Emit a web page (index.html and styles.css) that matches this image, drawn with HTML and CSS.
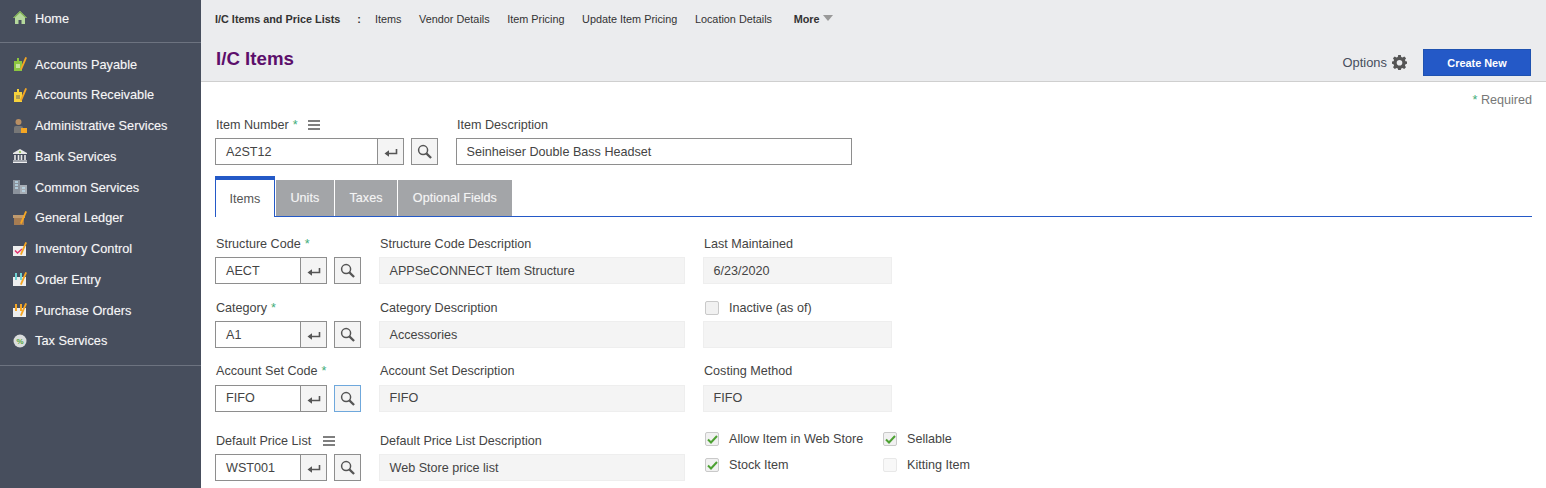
FILE: index.html
```html
<!DOCTYPE html>
<html lang="en">

<head>
    <meta charset="UTF-8">
    <meta name="viewport" content="width=device-width, initial-scale=1.0">
    <title>I/C Items</title>
    <link rel="stylesheet" href="styles.css">
</head>

<body>
    <svg class="svg-defs" width="0" height="0">
        <symbol id="pencil" viewBox="0 0 14 14"><path d="M12.3 0 L14 .7 L8.7 13 L7 12.3 Z" fill="#f5a623"/></symbol>
        <symbol id="enter" viewBox="0 0 14 10"><path d="M12.5 1 V5.5 H2" fill="none" stroke="#555" stroke-width="1.6"/><path d="M5 2.2 L.5 5.5 L5 8.8 Z" fill="#555"/></symbol>
        <symbol id="search" viewBox="0 0 16 16"><circle cx="6.5" cy="6.5" r="4.8" fill="none" stroke="#555" stroke-width="1.6"/><path d="M10 10 L15 15" stroke="#555" stroke-width="2.4"/></symbol>
        <symbol id="menu" viewBox="0 0 12 10"><path d="M0 1 H12 M0 5 H12 M0 9 H12" stroke="#555" stroke-width="1.3"/></symbol>
        <symbol id="tick" viewBox="0 0 11 9"><path d="M1 4.5 L4 7.5 L10 1" fill="none" stroke="#4da133" stroke-width="2"/></symbol>
    </svg>

    <div class="app">
        <nav class="sidebar">
            <div class="nav-home">
                <a class="nav-item">
                    <svg class="nav-icon" viewBox="0 0 14 14"><path d="M7 0 L14 7 H12 V13 H8.5 V9 H5.5 V13 H2 V7 H0 Z" fill="#b5d89c"/><path d="M7 0 L14 7 H12.5 L7 1.8 L1.5 7 H0 Z" fill="#7fb24f"/></svg>
                    Home
                </a>
            </div>
            <div class="nav-list">
                <a class="nav-item">
                    <svg class="nav-icon" viewBox="0 0 14 14"><rect x="1" y="4" width="8" height="10" fill="#8cc63f"/><rect x="4" y="1" width="2" height="3" fill="#8cc63f"/><path d="M3 8 H7 M3 10 H7" stroke="#fff"/><use href="#pencil"/></svg>
                    Accounts Payable
                </a>
                <a class="nav-item">
                    <svg class="nav-icon" viewBox="0 0 14 14"><rect x="1" y="4" width="8" height="10" fill="#f7d33c"/><rect x="4" y="1" width="2" height="3" fill="#f7d33c"/><path d="M3 8 H7 M3 10 H7" stroke="#666"/><use href="#pencil"/></svg>
                    Accounts Receivable
                </a>
                <a class="nav-item">
                    <svg class="nav-icon" viewBox="0 0 14 14"><circle cx="5.5" cy="3" r="3" fill="#b98f63"/><path d="M1 14 V8.5 Q1 7 3 7 H8 Q10 7 10 8.5 V14 Z" fill="#777"/><rect x="8" y="9" width="6" height="5" fill="#f5a623"/></svg>
                    Administrative Services
                </a>
                <a class="nav-item">
                    <svg class="nav-icon" viewBox="0 0 14 14"><path d="M7 0 L14 4 V5 H0 V4 Z" fill="#e8e8e8"/><circle cx="7" cy="3" r="1" fill="#8cc63f"/><path d="M2 6 V11 M5.5 6 V11 M8.5 6 V11 M12 6 V11" stroke="#e8e8e8" stroke-width="1.6"/><path d="M0 12 H14 M0 13.6 H14" stroke="#fff"/></svg>
                    Bank Services
                </a>
                <a class="nav-item">
                    <svg class="nav-icon" viewBox="0 0 14 14"><rect x="0" y="0" width="7" height="14" fill="#8b929c"/><rect x="7" y="5" width="7" height="9" fill="#a7adb5"/><path d="M2 2 H5 M2 5 H5 M2 8 H5 M9 8 H12 M9 11 H12" stroke="#bcdcec" stroke-width="1.4"/></svg>
                    Common Services
                </a>
                <a class="nav-item">
                    <svg class="nav-icon" viewBox="0 0 14 14"><rect x="0" y="4" width="12" height="3" fill="#c09a6e"/><rect x="1" y="7" width="10" height="7" fill="#a67c52"/><use href="#pencil"/></svg>
                    General Ledger
                </a>
                <a class="nav-item">
                    <svg class="nav-icon" viewBox="0 0 14 14"><rect x="0" y="4" width="13" height="10" fill="#eee"/><path d="M2 8.5 L4.5 11 L9 7" fill="none" stroke="#e0306f" stroke-width="1.5"/><use href="#pencil"/></svg>
                    Inventory Control
                </a>
                <a class="nav-item">
                    <svg class="nav-icon" viewBox="0 0 14 14"><rect x="0" y="5" width="13" height="9" fill="#eee"/><rect x="2" y="1" width="2" height="7" fill="#6fd3d3"/><rect x="7" y="1" width="2" height="7" fill="#6fd3d3"/><use href="#pencil"/></svg>
                    Order Entry
                </a>
                <a class="nav-item">
                    <svg class="nav-icon" viewBox="0 0 14 14"><rect x="0" y="5" width="13" height="9" fill="#eee"/><rect x="2" y="1" width="2" height="7" fill="#f5a623"/><rect x="7" y="1" width="2" height="7" fill="#f5a623"/><use href="#pencil"/></svg>
                    Purchase Orders
                </a>
                <a class="nav-item">
                    <svg class="nav-icon" viewBox="0 0 14 14"><circle cx="7" cy="7" r="6.5" fill="#d9dcdc"/><text x="7" y="10" font-size="8" font-weight="700" text-anchor="middle" fill="#4da133">%</text></svg>
                    Tax Services
                </a>
            </div>
        </nav>

        <div class="content">
            <header class="page-head">
                <div class="subnav">
                    <b class="subnav-title">I/C Items and Price Lists</b>
                    <span class="subnav-sep">:</span>
                    <a>Items</a>
                    <a>Vendor Details</a>
                    <a>Item Pricing</a>
                    <a>Update Item Pricing</a>
                    <a>Location Details</a>
                    <b class="subnav-more">More <i class="caret"></i></b>
                </div>
                <div class="title-row">
                    <h1>I/C Items</h1>
                    <div class="head-actions">
                        <span class="options">Options
                            <svg class="gear" viewBox="0 0 16 16"><path fill="#555" fill-rule="evenodd" d="M6.6 0 H9.4 L9.8 2.1 L11.3 2.7 L13.1 1.5 L15 3.4 L13.8 5.2 L14.4 6.6 L16 7 V9.4 L14.4 9.8 L13.8 11.3 L14.9 13.1 L13 15 L11.2 13.8 L9.8 14.4 L9.4 16 H6.6 L6.2 14.4 L4.8 13.8 L3 15 L1.1 13.1 L2.2 11.3 L1.6 9.8 L0 9.4 V7 L1.6 6.6 L2.2 5.2 L1 3.4 L2.9 1.5 L4.7 2.7 L6.2 2.1 Z M8 5.2 A3 3 0 1 0 8 11.2 A3 3 0 1 0 8 5.2 Z"/></svg>
                        </span>
                        <button class="btn-primary">Create New</button>
                    </div>
                </div>
            </header>

            <main class="form-area">
                <div class="required-note"><span class="req">*</span> Required</div>

                <div class="top-fields">
                    <div class="field">
                        <label>Item Number <span class="req">*</span> <svg class="menu-icon"><use href="#menu"/></svg></label>
                        <div class="lookup">
                            <span class="input input-main">A2ST12</span>
                            <span class="input-btn"><svg class="enter-icon"><use href="#enter"/></svg></span>
                            <span class="search-btn"><svg class="search-icon"><use href="#search"/></svg></span>
                        </div>
                    </div>
                    <div class="field">
                        <label>Item Description</label>
                        <span class="input input-desc">Seinheiser Double Bass Headset</span>
                    </div>
                </div>

                <div class="tabs">
                    <a class="tab tab-active">Items</a>
                    <a class="tab">Units</a>
                    <a class="tab">Taxes</a>
                    <a class="tab">Optional Fields</a>
                </div>

                <div class="form-row row-structure">
                    <div class="field col-code">
                        <label>Structure Code <span class="req">*</span></label>
                        <div class="lookup">
                            <span class="input input-code">AECT</span>
                            <span class="input-btn"><svg class="enter-icon"><use href="#enter"/></svg></span>
                            <span class="search-btn"><svg class="search-icon"><use href="#search"/></svg></span>
                        </div>
                    </div>
                    <div class="field col-desc">
                        <label>Structure Code Description</label>
                        <span class="readonly">APPSeCONNECT Item Structure</span>
                    </div>
                    <div class="field col-side">
                        <label>Last Maintained</label>
                        <span class="readonly">6/23/2020</span>
                    </div>
                </div>

                <div class="form-row row-category">
                    <div class="field col-code">
                        <label>Category <span class="req">*</span></label>
                        <div class="lookup">
                            <span class="input input-code">A1</span>
                            <span class="input-btn"><svg class="enter-icon"><use href="#enter"/></svg></span>
                            <span class="search-btn"><svg class="search-icon"><use href="#search"/></svg></span>
                        </div>
                    </div>
                    <div class="field col-desc">
                        <label>Category Description</label>
                        <span class="readonly">Accessories</span>
                    </div>
                    <div class="field col-side">
                        <label class="check-label"><i class="check"></i>Inactive (as of)</label>
                        <span class="readonly"></span>
                    </div>
                </div>

                <div class="form-row row-account">
                    <div class="field col-code">
                        <label>Account Set Code <span class="req">*</span></label>
                        <div class="lookup lookup-low">
                            <span class="input input-code">FIFO</span>
                            <span class="input-btn"><svg class="enter-icon"><use href="#enter"/></svg></span>
                            <span class="search-btn search-focus"><svg class="search-icon"><use href="#search"/></svg></span>
                        </div>
                    </div>
                    <div class="field col-desc">
                        <label>Account Set Description</label>
                        <span class="readonly readonly-low">FIFO</span>
                    </div>
                    <div class="field col-side">
                        <label>Costing Method</label>
                        <span class="readonly readonly-low">FIFO</span>
                    </div>
                </div>

                <div class="form-row row-price">
                    <div class="field col-code">
                        <label>Default Price List <svg class="menu-icon menu-gap"><use href="#menu"/></svg></label>
                        <div class="lookup">
                            <span class="input input-code">WST001</span>
                            <span class="input-btn"><svg class="enter-icon"><use href="#enter"/></svg></span>
                            <span class="search-btn"><svg class="search-icon"><use href="#search"/></svg></span>
                        </div>
                    </div>
                    <div class="field col-desc">
                        <label>Default Price List Description</label>
                        <span class="readonly">Web Store price list</span>
                    </div>
                    <div class="check-grid">
                        <label class="check-label"><i class="check"><svg class="tick-icon"><use href="#tick"/></svg></i>Allow Item in Web Store</label>
                        <label class="check-label"><i class="check"><svg class="tick-icon"><use href="#tick"/></svg></i>Sellable</label>
                        <label class="check-label"><i class="check"><svg class="tick-icon"><use href="#tick"/></svg></i>Stock Item</label>
                        <label class="check-label"><i class="check check-disabled"></i>Kitting Item</label>
                    </div>
                </div>
            </main>
        </div>
    </div>
</body>

</html>
```

FILE: styles.css
```css
html, body {
    height: 100%;
}

body {
    font-family: "Liberation Sans", Arial, sans-serif;
    font-size: 12.6px;
    margin: 0;
    padding: 0;
    overflow: hidden;
    background-color: #ffffff;
    color: #444;
}

.svg-defs {
    display: block;
    height: 0;
}

.app {
    display: flex;
    height: 488px;
    overflow: hidden;
}

/* left menu */
.sidebar {
    flex: 0 0 201px;
    background-color: #474e5d;
    color: #f6f6f6;
    font-size: 12.75px;
    text-shadow: 0 0 1px rgba(255, 255, 255, 0.35);
}

.nav-home {
    padding-top: 3px;
    height: 39px;
    border-bottom: 1px solid #6d7380;
}

.nav-list {
    padding-top: 5.7px;
    height: 316.3px;
    border-bottom: 1px solid #6d7380;
}

.nav-item {
    display: flex;
    align-items: center;
    height: 30.75px;
    padding-left: 13px;
}

.nav-icon {
    width: 14px;
    height: 14px;
    margin-right: 8px;
    flex: none;
}

/* header band */
.content {
    flex: 1;
    min-width: 0;
}

.page-head {
    height: 81px;
    background-color: #ebecee;
    border-bottom: 1px solid #cfcfcf;
    padding: 0 15px 0 14px;
}

.subnav {
    display: flex;
    align-items: center;
    height: 38px;
    font-size: 10.85px;
    color: #333;
}

.subnav a {
    margin-right: 17.6px;
}

.subnav-sep {
    font-weight: 700;
    margin: 0 14px 0 17px;
}

.subnav-more {
    margin-left: 4px;
}

.caret {
    display: inline-block;
    width: 0;
    height: 0;
    border-left: 5px solid transparent;
    border-right: 5px solid transparent;
    border-top: 6px solid #999;
    vertical-align: 2px;
}

.title-row {
    display: flex;
    justify-content: space-between;
    align-items: flex-start;
}

h1 {
    margin: 10px 0 0 1px;
    font-size: 18.7px;
    line-height: 22px;
    color: #5c0f6b;
}

.head-actions {
    display: flex;
    align-items: center;
    margin-top: 11px;
}

.options {
    display: flex;
    align-items: center;
    margin-right: 16px;
    font-size: 12.9px;
    color: #474e5d;
}

.gear {
    width: 15px;
    height: 15px;
    margin-left: 5px;
}

.btn-primary {
    width: 108px;
    height: 27px;
    padding: 0;
    border: 1px solid #1f52b0;
    background-color: #2459c7;
    color: #fff;
    font-family: inherit;
    font-size: 10.9px;
    font-weight: 700;
}

/* form */
.form-area {
    padding: 0 14px 0 14px;
}

.required-note {
    text-align: right;
    padding-top: 11px;
    height: 21px;
    color: #777;
}

.req {
    color: #3fae7a;
}

label {
    display: flex;
    align-items: center;
    gap: 4px;
    height: 14px;
    padding-left: 1px;
    color: #444;
}

.top-fields {
    display: flex;
    gap: 18px;
    margin-top: 4px;
}

.menu-icon {
    width: 12px;
    height: 10px;
    margin-left: 6px;
}

.menu-gap {
    margin-left: 8px;
}

.lookup {
    display: flex;
    margin-top: 6px;
}

.lookup-low {
    margin-top: 7px;
}

.input,
.readonly {
    display: block;
    box-sizing: border-box;
    height: 27px;
    line-height: 27px;
    padding-left: 10px;
}

.lookup-low .input,
.readonly-low {
    line-height: 25px;
}

.input {
    border: 1px solid #8e8e8e;
    background-color: #fff;
}

.input-main {
    width: 163px;
}

.input-code {
    width: 86px;
}

.input-desc {
    width: 396px;
    margin-top: 6px;
    padding-left: 9.5px;
}

.input-btn,
.search-btn {
    display: flex;
    align-items: center;
    justify-content: center;
    box-sizing: border-box;
    height: 27px;
    border: 1px solid #8e8e8e;
    background-color: #f4f4f4;
}

.input-btn {
    width: 27px;
    margin-left: -1px;
}

.search-btn {
    width: 27px;
    margin-left: 7px;
}

.search-focus {
    border-color: #6fa8dc;
}

.enter-icon {
    width: 14px;
    height: 10px;
    margin-top: 2px;
}

.search-icon {
    width: 15px;
    height: 15px;
}

/* tabs */
.tabs {
    display: flex;
    align-items: flex-end;
    gap: 1px;
    height: 40px;
    margin-top: 11px;
    border-bottom: 1px solid #2459c7;
}

.tab {
    display: flex;
    align-items: center;
    justify-content: center;
    height: 36px;
    padding: 0 14.7px;
    background-color: #a3a5a8;
    color: #f4f4f4;
    text-shadow: 0 0 1px rgba(255, 255, 255, 0.35);
}

.tab-active {
    box-sizing: border-box;
    height: 41px;
    margin-bottom: -1px;
    padding: 0 13.5px;
    background-color: #fff;
    color: #555;
    text-shadow: none;
    border-top: 4px solid #2459c7;
    border-left: 1px solid #2459c7;
    border-right: 1px solid #2459c7;
}

.form-row {
    display: flex;
}

.row-structure {
    margin-top: 20px;
}

.row-category {
    margin-top: 17px;
}

.row-account {
    margin-top: 16px;
}

.row-price {
    margin-top: 22px;
}

.col-code {
    width: 164px;
}

.col-desc {
    width: 306px;
    margin-right: 18px;
}

.col-side {
    width: 189px;
}

.readonly {
    margin-top: 6px;
    padding-left: 9.5px;
    background-color: #f4f4f4;
    border: 1px solid #eeeeee;
}

.readonly-low {
    margin-top: 7px;
}

.check-label {
    gap: 10px;
}

.check {
    display: flex;
    align-items: center;
    justify-content: center;
    box-sizing: border-box;
    width: 14px;
    height: 14px;
    border: 1px solid #c9c9c9;
    background-color: #f1f1f1;
    border-radius: 2px;
    flex: none;
    margin-left: 1px;
}

.check-disabled {
    background-color: #f8f8f8;
    border-color: #e8e8e8;
}

.tick-icon {
    width: 11px;
    height: 9px;
}

.check-grid {
    display: grid;
    grid-template-columns: 178px auto;
    row-gap: 12px;
    align-content: start;
    margin-top: -2px;
}
```
